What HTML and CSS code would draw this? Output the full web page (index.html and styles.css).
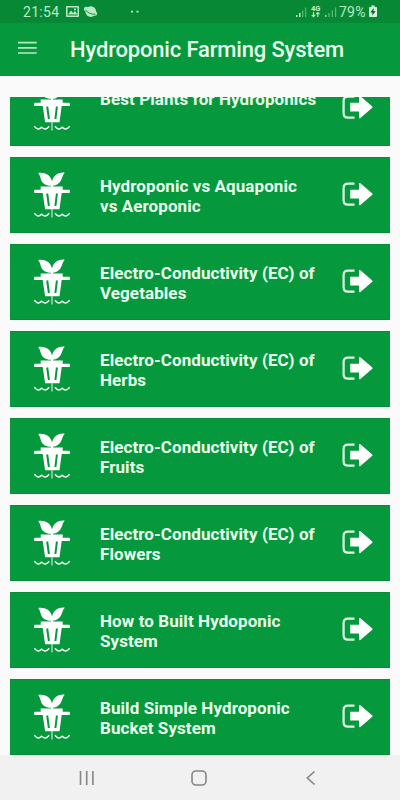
FILE: index.html
```html
<!DOCTYPE html>
<html lang="en">
<head>
    <meta charset="UTF-8">
    <meta name="viewport" content="width=device-width, initial-scale=1.0">
    <title>Hydroponic Farming System</title>
    <link rel="stylesheet" href="styles.css">
</head>
<body>
    <svg class="defs">
        <symbol id="plant" viewBox="0 0 36 47">
            <path fill="#fff" d="M17 14.800C14.500 14.900 11 14 8.800 11.700C6.300 9 6.800 5 4.200 1.900C10.500 1 16.500 3.500 18 10.500C19.500 4 25 1 30.800 1.700C28 4.500 28.300 8.500 25.700 11.300C23.400 14 20.500 14.800 19 14.800V15.600H28.700V18.700H35.200Q36 18.700 36 20.400Q36 22 35.200 22H27.700L25.500 38.300H11.100L8.700 22H.8Q0 22 0 20.400Q0 18.700 .8 18.700H6.700V15.600H17Z"/>
            <path fill="none" stroke="#05983c" stroke-width="2" d="M13.200 22.500L14.900 35M22.900 22.500L21.400 35"/>
            <path fill="none" stroke="#f0fdf2" stroke-width="1.500" d="M.3 42.300Q4 47 7.500 43.300Q11.500 47 15.200 42.300M21 42.300Q24.500 47 28.200 43.300Q32 47 35.700 42.300"/>
            <path fill="none" stroke="#c0eccb" stroke-width="1.200" d="M18 38V46.500"/>
        </symbol>
        <symbol id="open" viewBox="0 0 31 24">
            <path fill="none" stroke="#e0fae6" stroke-width="2.200" d="M12.500 1.600H6Q1.600 1.600 1.600 6V18.200Q1.600 22.600 6 22.600H12.500"/>
            <path fill="#fff" d="M8.200 7.700H17V1.700Q17.200.4 18.400 1.200L30.300 11.400Q31 12 30.300 12.700L18.400 23Q17.200 23.600 17 22.300V16.500H8.200Z"/>
        </symbol>
    </svg>

    <header>
        <div class="status">
            <span class="clock">21:54</span>
            <svg class="status-left" width="80" height="24" viewBox="0 0 80 24">
                <path fill="#b9e9c5" fill-rule="evenodd" d="M1 6H12Q13 6 13 7V16Q13 17 12 17H1Q0 17 0 16V7Q0 6 1 6ZM1.500 7.500V15.500H11.500V7.500Z"/>
                <path fill="#b9e9c5" d="M2 14.500L5 10.500L7 13L9 11L11.500 14.500ZM8 8.500H10V10.200H8Z"/>
                <ellipse cx="24.800" cy="11.600" rx="5.300" ry="5.300" fill="#b9e9c5"/>
                <ellipse cx="24.500" cy="11.300" rx="6.800" ry="2.500" transform="rotate(27 24.500 11.300)" fill="#b9e9c5" stroke="#b9e9c5" stroke-width="1"/>
                <path fill="none" stroke="#078834" stroke-width=".9" d="M19.500 10Q23 14.500 29.500 14.300"/>
                <path fill="#b9e9c5" d="M65 10.700H67V12.500H65ZM70.500 10.700H72.500V12.500H70.500Z"/>
            </svg>
            <svg class="signal" width="44" height="24" viewBox="0 0 44 24">
                <path fill="#c4ecce" d="M1 15H2.500V17H1ZM4 13H5.500V17H4Z"/>
                <path fill="#5bb778" d="M7 10.500H8.300V17H7ZM10 7.500H11.200V17H10Z"/>
                <text x="16" y="10.800">4G</text>
                <path fill="none" stroke="#c4ecce" stroke-width="1.100" d="M18.500 12V16.500M16.800 15L18.500 16.700L20.200 15M22.800 17V12.600M21.100 14.200L22.800 12.500L24.500 14.200"/>
                <path fill="#8fd0a3" d="M30 15H31.500V17H30Z"/>
                <path fill="#5bb778" d="M33.300 13H34.600V17H33.300ZM36.700 10.500H38V17H36.700ZM40 7.500H41.200V17H40Z"/>
            </svg>
            <span class="percent">79%</span>
            <svg class="battery" width="8" height="24" viewBox="0 0 8 24">
                <path fill="#d5f2db" d="M2.300 5.500H5.700V7H7.300Q8 7 8 8V16Q8 17 7.200 17H.8Q0 17 0 16V8Q0 7 .7 7H2.300Z"/>
                <path fill="#07562a" d="M4.800 8L1.300 12.400H3.600L3 15.800L6.700 11.300H4.400Z"/>
            </svg>
        </div>
        <div class="appbar">
            <svg class="menu" width="20" height="14" viewBox="0 0 20 14">
                <path stroke="#b5ebc3" stroke-width="1.700" d="M0 1.600H18.700M0 6.800H18.700M0 12H18.700"/>
            </svg>
            <h1>Hydroponic Farming System</h1>
        </div>
    </header>

    <main>
        <div class="list">
            <div class="card">
                <svg class="plant"><use href="#plant"/></svg>
                <p>Best Plants for Hydroponics</p>
                <svg class="open"><use href="#open"/></svg>
            </div>
            <div class="card">
                <svg class="plant"><use href="#plant"/></svg>
                <p>Hydroponic vs Aquaponic<br>vs Aeroponic</p>
                <svg class="open"><use href="#open"/></svg>
            </div>
            <div class="card">
                <svg class="plant"><use href="#plant"/></svg>
                <p>Electro-Conductivity (EC) of<br>Vegetables</p>
                <svg class="open"><use href="#open"/></svg>
            </div>
            <div class="card">
                <svg class="plant"><use href="#plant"/></svg>
                <p>Electro-Conductivity (EC) of<br>Herbs</p>
                <svg class="open"><use href="#open"/></svg>
            </div>
            <div class="card">
                <svg class="plant"><use href="#plant"/></svg>
                <p>Electro-Conductivity (EC) of<br>Fruits</p>
                <svg class="open"><use href="#open"/></svg>
            </div>
            <div class="card">
                <svg class="plant"><use href="#plant"/></svg>
                <p>Electro-Conductivity (EC) of<br>Flowers</p>
                <svg class="open"><use href="#open"/></svg>
            </div>
            <div class="card">
                <svg class="plant"><use href="#plant"/></svg>
                <p>How to Built Hydoponic<br>System</p>
                <svg class="open"><use href="#open"/></svg>
            </div>
            <div class="card">
                <svg class="plant"><use href="#plant"/></svg>
                <p>Build Simple Hydroponic<br>Bucket System</p>
                <svg class="open"><use href="#open"/></svg>
            </div>
        </div>
    </main>

    <nav>
        <svg width="16" height="16" viewBox="0 0 16 16"><path d="M1.500 1V15M7.700 1V15M13.900 1V15"/></svg>
        <svg width="16" height="16" viewBox="0 0 16 16"><rect x="1" y="1" width="14" height="14" rx="4"/></svg>
        <svg width="16" height="16" viewBox="0 0 16 16"><path d="M11.500 1.500L4.300 8L11.500 14.500"/></svg>
    </nav>
</body>
</html>
```

FILE: styles.css
```css
* {box-sizing: border-box;}
body {
    margin: 0;
    height: 800px;
    display: flex;
    flex-direction: column;
    overflow: hidden;
    background: #fafafa;
    font-family: Roboto, sans-serif;
    color: #e9fdec;
}
svg {flex: none; display: block;}
.defs {display: none;}

.status {
    display: flex;
    align-items: center;
    height: 23px;
    padding: 0 23px 0 23px;
    background: #078834;
    color: #b9e9c5;
    font-size: 14px;
    line-height: 24px;
}
.clock {width: 43px; letter-spacing: 0.3px;}
.status-left {margin-right: auto;}
.signal {margin-right: 0;}
.signal text {font-size: 7.5px; font-weight: 700; fill: #c4ecce;}
.percent {width: 30px; letter-spacing: 0.2px;}

.appbar {
    display: flex;
    align-items: center;
    height: 53px;
    padding-left: 18px;
    background: #05983c;
}
.menu {margin: -3px 32px 0 0;}
h1 {margin: 0; font-size: 22px; font-weight: 500; line-height: 26px; letter-spacing: -0.17px; white-space: nowrap;}

main {height: 658px; margin-top: 21px; padding: 0 10px; overflow: hidden;}
.list {display: flex; flex-direction: column; gap: 11px; margin-top: -27px;}
.card {
    display: flex;
    align-items: flex-start;
    flex: none;
    height: 76px;
    padding: 13px 17px 0 24px;
    background: #05983c;
    border: solid #078c38;
    border-width: 1px 0;
}
.plant {width: 36px; height: 47px;}
.card p {
    flex: 1;
    margin: 5px 0 0 30px;
    font-size: 17px;
    font-weight: 700;
    line-height: 20px;
    letter-spacing: 0.08px;
    white-space: nowrap;
}
.open {width: 31px; height: 24px; margin-top: 11px;}

nav {
    display: flex;
    justify-content: space-between;
    align-items: center;
    height: 45px;
    padding: 1px 81px 0 79px;
    background: #f1f1f1;
}
nav svg {fill: none; stroke: #858585; stroke-width: 1.6;}
```
